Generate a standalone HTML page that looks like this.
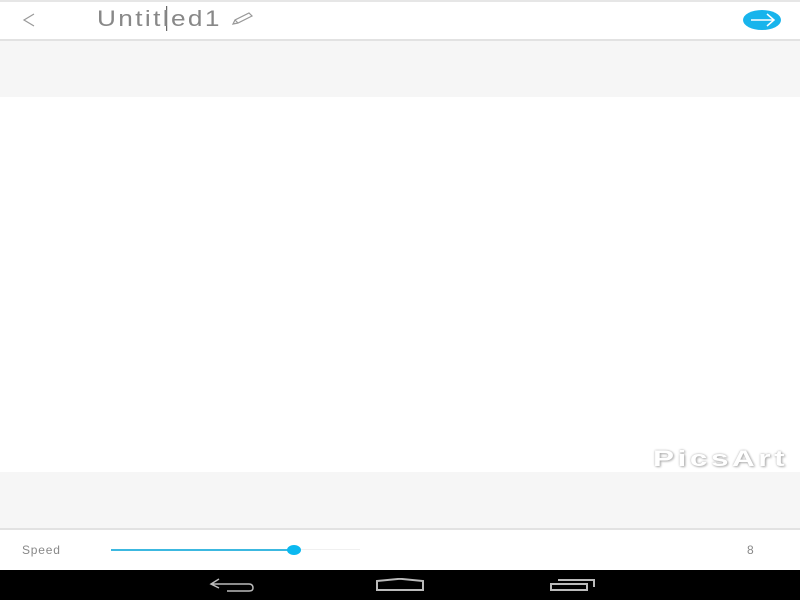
<!DOCTYPE html>
<html><head><style>
body{margin:0;width:800px;height:600px;position:relative;background:#fff;font-family:"Liberation Sans",sans-serif;overflow:hidden}
.a{position:absolute}
</style></head><body>
<div class="a" style="left:0;top:0;width:800px;height:2px;background:#e6e6e6"></div>
<div class="a" style="left:0;top:39px;width:800px;height:2px;background:#e2e2e2"></div>
<div class="a" style="left:0;top:41px;width:800px;height:56px;background:#f6f6f6"></div>
<svg class="a" style="left:22px;top:12px" width="14" height="16"><path d="M12 2 L2 8 L12 14" stroke="#999" stroke-width="1.2" fill="none"/></svg>
<div class="a" style="left:97px;top:6px;font-size:22px;color:#888;letter-spacing:2px;transform:scaleX(1.19);transform-origin:left">Untit<span style="border-left:1px solid #666;margin-left:3px;margin-right:-4px"></span>led1</div>
<svg class="a" style="left:231px;top:11px" width="24" height="16"><path d="M2 13 L4 9 L18 2 L21 5 L7 12 Z M4 9 L7 12" stroke="#999" stroke-width="1.2" fill="none"/></svg>
<svg class="a" style="left:743px;top:9px" width="40" height="22"><ellipse cx="19" cy="11" rx="19" ry="10" fill="#18b4ec"/><path d="M8 11 H30 M24 5 L31 11 L24 17" stroke="#fff" stroke-width="1.5" fill="none"/></svg>
<div class="a" style="left:653px;top:446px;font-size:22px;font-weight:bold;color:#fff;text-shadow:0 0 2px #aaa,1px 1px 2px #bbb;letter-spacing:2.5px;transform:scaleX(1.43);transform-origin:left">PicsArt</div>
<div class="a" style="left:0;top:472px;width:800px;height:56px;background:#f6f6f6"></div>
<div class="a" style="left:0;top:528px;width:800px;height:2px;background:#e2e2e2"></div>
<div class="a" style="left:22px;top:543px;font-size:12px;color:#888;letter-spacing:.8px">Speed</div>
<div class="a" style="left:111px;top:549px;width:183px;height:2px;background:#3cb8e0"></div>
<div class="a" style="left:294px;top:549px;width:66px;height:1px;background:#f0f0f0"></div>
<div class="a" style="left:287px;top:545px;width:14px;height:10px;border-radius:50%;background:#0bb8f0"></div>
<div class="a" style="left:747px;top:543px;font-size:12px;color:#888">8</div>
<div class="a" style="left:0;top:570px;width:800px;height:30px;background:#000"></div>
<svg class="a" style="left:205px;top:576px" width="50" height="20"><path d="M14 3 L6 8 L14 12 M6 8 H44 Q48 8 48 12 Q48 15 44 15 H22" stroke="#bbb" stroke-width="1.5" fill="none"/></svg>
<svg class="a" style="left:374px;top:578px" width="52" height="14"><path d="M3 3 L26 0.8 L49 3 V12 H3 Z" stroke="#bbb" stroke-width="2" fill="none"/></svg>
<svg class="a" style="left:548px;top:578px" width="50" height="14"><path d="M3 6 H39 V12 H3 Z M10 2 H46 V9" stroke="#bbb" stroke-width="2" fill="none"/></svg>
</body></html>
